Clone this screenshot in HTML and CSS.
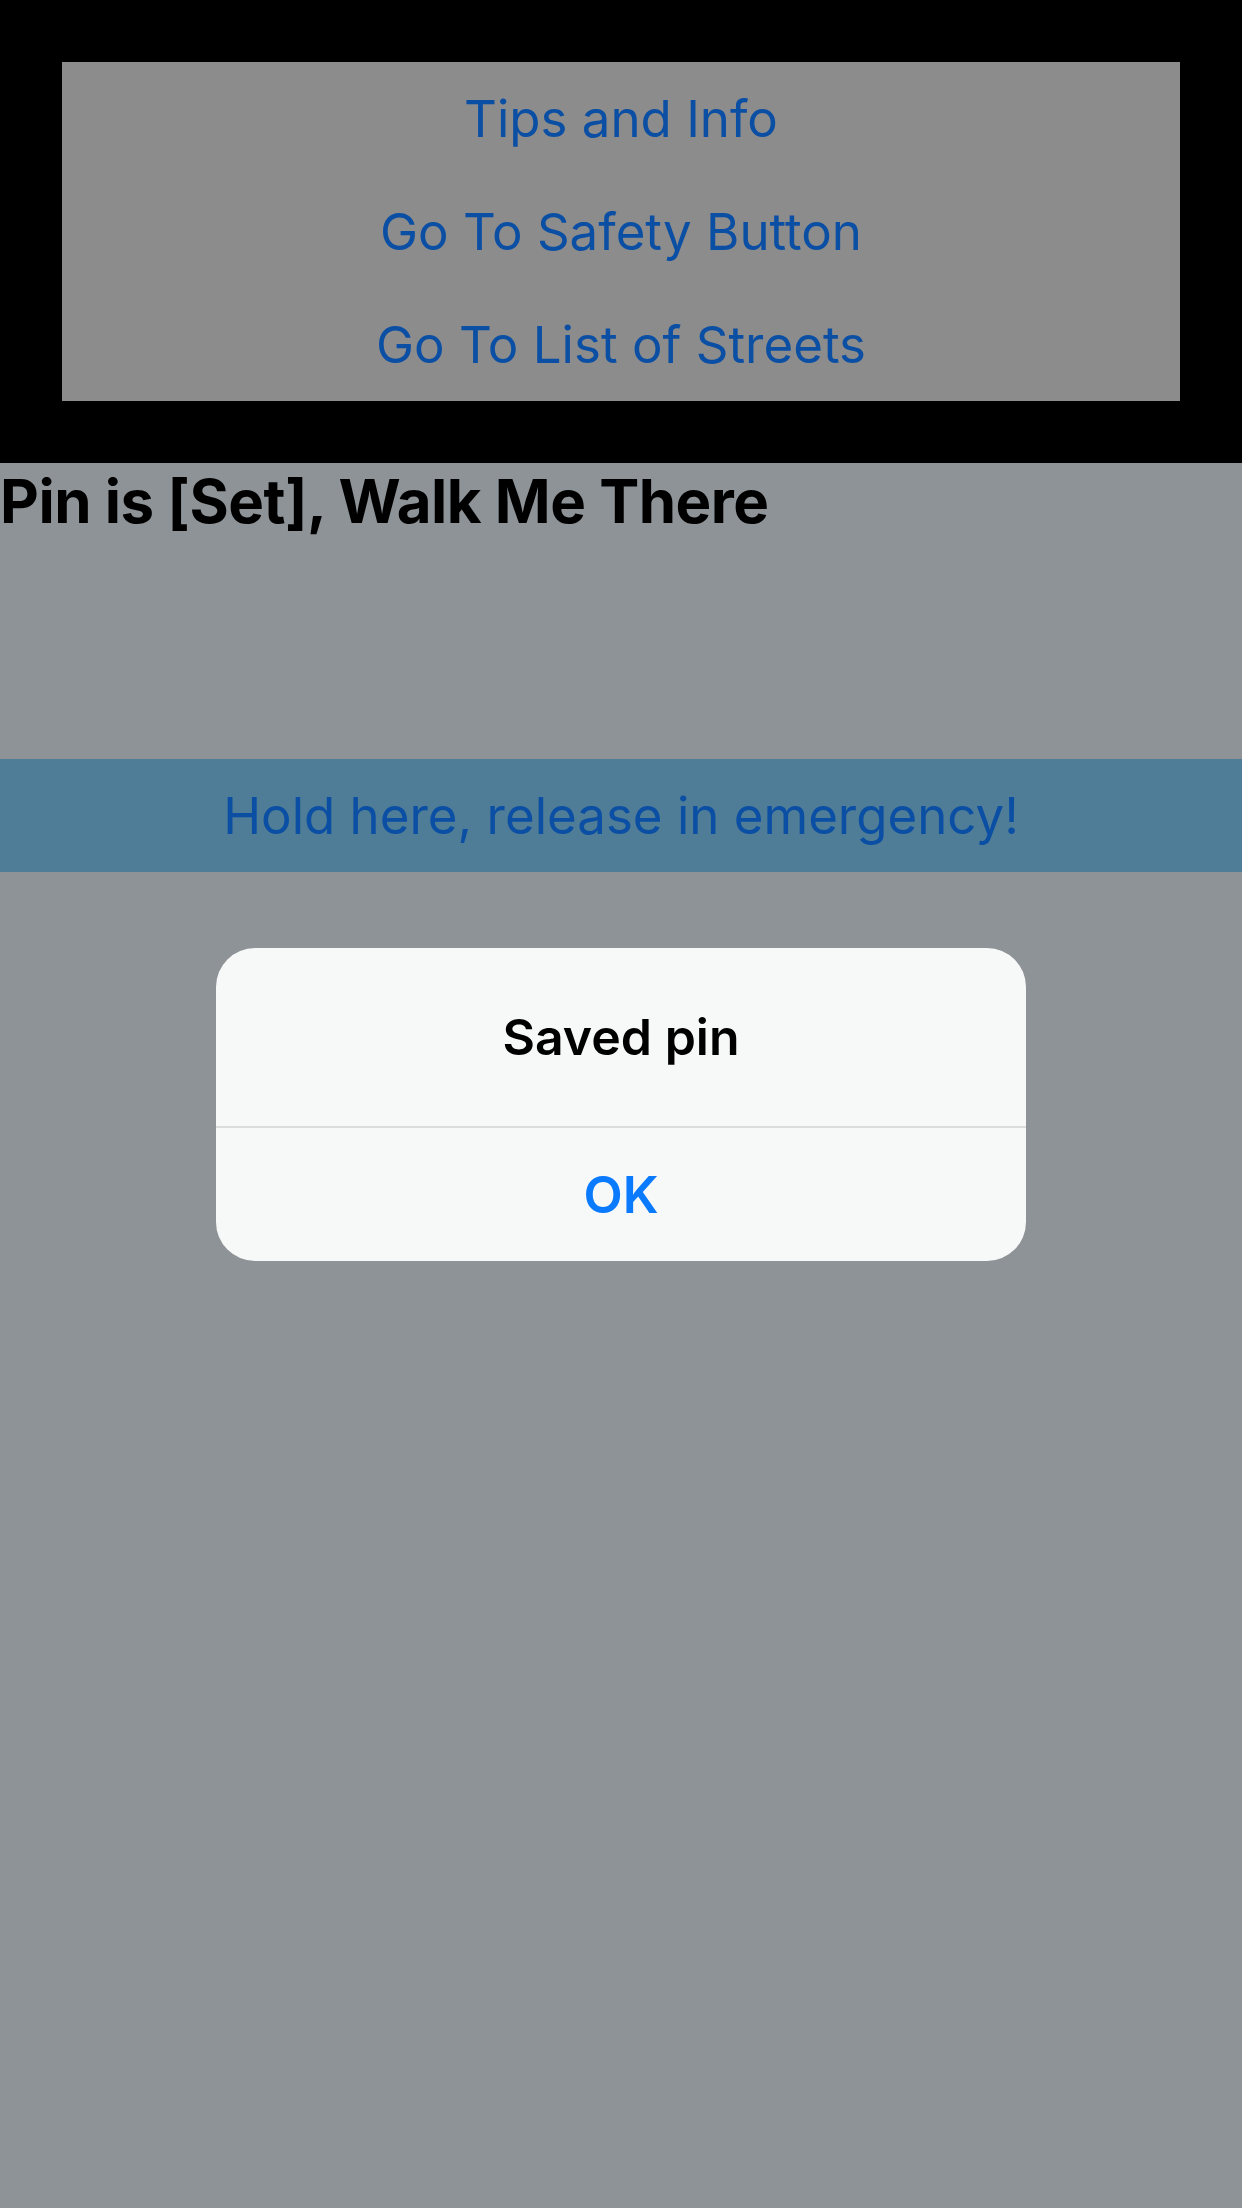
FILE: index.html
```html
<!DOCTYPE html>
<html lang="en">
<head>
    <meta charset="UTF-8">
    <meta name="viewport" content="width=device-width, initial-scale=1.0">
    <title>Pin</title>
    <link rel="stylesheet" href="styles.css">
</head>
<body>
    <div class="top-bar">
        <div class="nav-box">
            <a href="#" class="nav-link">Tips and Info</a>
            <a href="#" class="nav-link">Go To Safety Button</a>
            <a href="#" class="nav-link">Go To List of Streets</a>
        </div>
    </div>

    <h1 class="pin-title">Pin is [Set], Walk Me There</h1>

    <div class="hold-button">Hold here, release in emergency!</div>

    <!-- alerta por cima da página -->
    <div class="alert">
        <div class="alert-title">Saved pin</div>
        <div class="alert-action">OK</div>
    </div>
</body>
</html>
```

FILE: styles.css
```css
* {
    margin: 0;
    padding: 0;
    box-sizing: border-box;
}

body {
    font-family: Inter, "Noto Sans", sans-serif;
    background-color: #8e9397;
    min-height: 2208px;
    position: relative;
}

/* Faixa preta do topo */
.top-bar {
    background-color: #000;
    padding: 62px;
    height: 463px;
}

.nav-box {
    background-color: #8c8c8c;
    display: flex;
    flex-direction: column;
}

.nav-link {
    height: 113px;
    display: flex;
    align-items: center;
    justify-content: center;
    color: #0b4fa4;
    text-decoration: none;
    font-size: 51px;
}

.pin-title {
    font-size: 60px;
    font-weight: 700;
    line-height: 72px;
    color: #000;
    margin-top: 2px;
    letter-spacing: -0.5px;
}

.hold-button {
    margin-top: 222px;
    height: 113px;
    background-color: #4f7c96;
    color: #0b4fa4;
    font-size: 51px;
    display: flex;
    align-items: center;
    justify-content: center;
}

.alert {
    position: absolute;
    top: 948px;
    left: 216px;
    width: 810px;
    background-color: #f7f8f8;
    border-radius: 39px;
    overflow: hidden;
}

.alert-title {
    height: 180px;
    display: flex;
    align-items: center;
    justify-content: center;
    font-size: 50px;
    font-weight: 600;
    color: #000;
    border-bottom: 2px solid #dcdcdc;
}

.alert-action {
    height: 133px;
    display: flex;
    align-items: center;
    justify-content: center;
    font-size: 51px;
    font-weight: 600;
    color: #0a7aff;
}
```
